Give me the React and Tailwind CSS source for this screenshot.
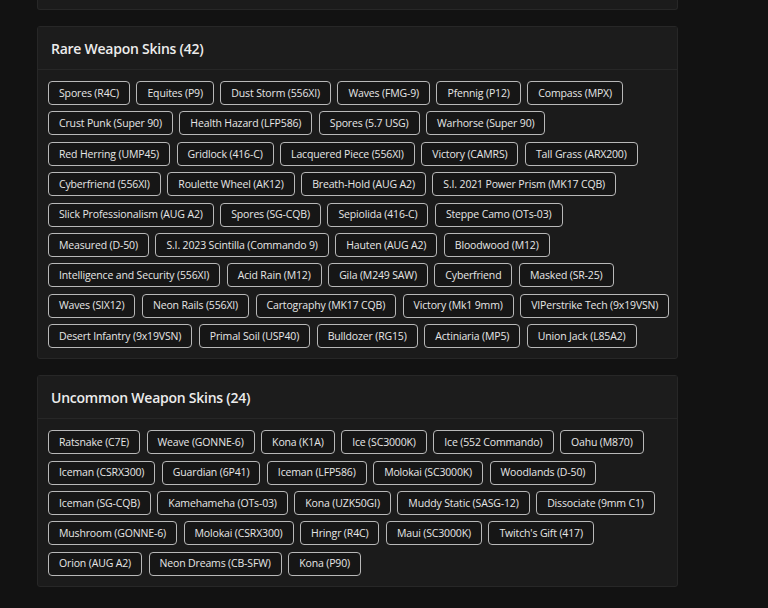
import React from "react";

const rare = [
  ["Spores (R4C)", "Equites (P9)", "Dust Storm (556XI)", "Waves (FMG-9)", "Pfennig (P12)", "Compass (MPX)"],
  ["Crust Punk (Super 90)", "Health Hazard (LFP586)", "Spores (5.7 USG)", "Warhorse (Super 90)"],
  ["Red Herring (UMP45)", "Gridlock (416-C)", "Lacquered Piece (556XI)", "Victory (CAMRS)", "Tall Grass (ARX200)"],
  ["Cyberfriend (556XI)", "Roulette Wheel (AK12)", "Breath-Hold (AUG A2)", "S.I. 2021 Power Prism (MK17 CQB)"],
  ["Slick Professionalism (AUG A2)", "Spores (SG-CQB)", "Sepiolida (416-C)", "Steppe Camo (OTs-03)"],
  ["Measured (D-50)", "S.I. 2023 Scintilla (Commando 9)", "Hauten (AUG A2)", "Bloodwood (M12)"],
  ["Intelligence and Security (556XI)", "Acid Rain (M12)", "Gila (M249 SAW)", "Cyberfriend", "Masked (SR-25)"],
  ["Waves (SIX12)", "Neon Rails (556XI)", "Cartography (MK17 CQB)", "Victory (Mk1 9mm)", "VIPerstrike Tech (9x19VSN)"],
  ["Desert Infantry (9x19VSN)", "Primal Soil (USP40)", "Bulldozer (RG15)", "Actiniaria (MP5)", "Union Jack (L85A2)"],
];

const uncommon = [
  ["Ratsnake (C7E)", "Weave (GONNE-6)", "Kona (K1A)", "Ice (SC3000K)", "Ice (552 Commando)", "Oahu (M870)"],
  ["Iceman (CSRX300)", "Guardian (6P41)", "Iceman (LFP586)", "Molokai (SC3000K)", "Woodlands (D-50)"],
  ["Iceman (SG-CQB)", "Kamehameha (OTs-03)", "Kona (UZK50GI)", "Muddy Static (SASG-12)", "Dissociate (9mm C1)"],
  ["Mushroom (GONNE-6)", "Molokai (CSRX300)", "Hringr (R4C)", "Maui (SC3000K)", "Twitch's Gift (417)"],
  ["Orion (AUG A2)", "Neon Dreams (CB-SFW)", "Kona (P90)"],
];

function Tag({ label }) {
  return (
    <span className="flex h-[24px] items-center rounded-[4px] border border-[#b8b8b8] bg-[#161616] px-[10px] text-[10.5px] leading-none tracking-[-0.15px] text-[#e6e6e6] whitespace-nowrap">
      {label}
    </span>
  );
}

function Card({ title, rows }) {
  return (
    <div className="w-[641px] rounded-[3px] border border-[#272727] bg-[#1b1b1b]">
      <div className="flex h-[43px] items-center border-b border-[#272727] bg-[#1c1c1c] px-[13px] text-[14px] font-semibold tracking-[-0.25px] text-[#ececec]">
        {title}
      </div>
      <div className="flex flex-col gap-[6.4px] px-[10px] pt-[11px] pb-[10px]">
        {rows.map((row, i) => (
          <div key={i} className="flex gap-[6.5px]">
            {row.map((t, j) => (
              <Tag key={j} label={t} />
            ))}
          </div>
        ))}
      </div>
    </div>
  );
}

export default function App() {
  return (
    <div
      className="min-h-[608px] w-[768px] bg-[#121212] pl-[37px]"
      style={{ fontFamily: '"Open Sans", "Noto Sans", sans-serif' }}
    >
      <div className="h-[10px] w-[641px] rounded-b-[3px] border-x border-b border-[#272727] bg-[#1b1b1b]" />
      <div className="mt-[16px]">
        <Card title="Rare Weapon Skins (42)" rows={rare} />
      </div>
      <div className="mt-[16px]">
        <Card title="Uncommon Weapon Skins (24)" rows={uncommon} />
      </div>
    </div>
  );
}
